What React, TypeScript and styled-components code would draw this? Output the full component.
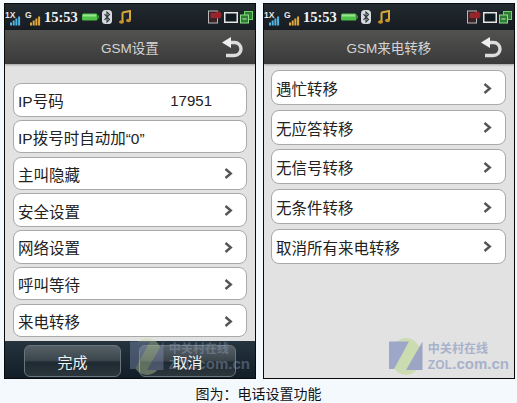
import React from "react";
import styled, { createGlobalStyle } from "styled-components";

const Global = createGlobalStyle`
  html, body { margin: 0; padding: 0; background: #f4f9fe; }
  body { width: 517px; height: 403px; overflow: hidden; font-family: "Liberation Sans", "Noto Sans CJK SC", sans-serif; }
`;

const Page = styled.div`
  width: 517px;
  height: 403px;
  display: flex;
  flex-direction: column;
`;

const Shots = styled.div`
  display: flex;
  gap: 7px;
  padding: 3px 0 0 4px;
  height: 376px;
`;

const Phone = styled.div`
  position: relative;
  box-sizing: border-box;
  width: 252px;
  height: 376px;
  border: 1px solid #0a0a0a;
  background: #e2e2e2;
  display: flex;
  flex-direction: column;
  overflow: hidden;
`;

const StatusBar = styled.div`
  height: 26px;
  flex: none;
  display: flex;
  align-items: center;
  padding: 0 2px 0 0;
  background: linear-gradient(#232a30, #161b20);
`;

const Clock = styled.span`
  font-family: "Liberation Serif", serif;
  font-weight: 700;
  font-size: 14.5px;
  color: #f2f2f2;
  margin: 0 4px 0 3px;
`;

const Gap = styled.span<{ $w: number }>`
  width: ${(p) => p.$w}px;
  flex: none;
`;

const StatusIcons = styled.div`
  margin-left: auto;
  display: flex;
  align-items: center;
  gap: 2px;
`;

const TitleBar = styled.div`
  position: relative;
  height: 34px;
  flex: none;
  display: flex;
  align-items: center;
  justify-content: center;
  background: linear-gradient(#525251, #3a3a3a);
  box-shadow: 0 1px 2px rgba(0, 0, 0, 0.3);
  color: #d4d4d4;
  font-size: 13.5px;
`;

const BackBtn = styled.svg`
  position: absolute;
  right: 12px;
  top: 7px;
`;

const List = styled.div<{ $top: number; $gap: number; $left: number }>`
  display: flex;
  flex-direction: column;
  gap: ${(p) => p.$gap}px;
  padding: ${(p) => p.$top}px 8px 0 ${(p) => p.$left}px;
`;

const Row = styled.div<{ $h: number }>`
  height: ${(p) => p.$h}px;
  flex: none;
  box-sizing: border-box;
  display: flex;
  align-items: center;
  padding: 1px 13px 0 4px;
  background: #fff;
  border: 1px solid #a9a9a9;
  border-radius: 8px;
  color: #222;
  font-size: 15.5px;
`;

const RowValue = styled.span`
  margin-left: auto;
  margin-right: 21px;
  font-size: 15px;
`;

const Chevron = styled.svg`
  margin-left: auto;
`;

const Footer = styled.div`
  margin-top: auto;
  height: 37px;
  flex: none;
  box-sizing: border-box;
  display: flex;
  gap: 18px;
  padding: 4px 0 1px 19px;
  background: linear-gradient(#25343f, #121e28);
`;

const FootBtn = styled.div`
  width: 97px;
  box-sizing: border-box;
  display: flex;
  align-items: center;
  justify-content: center;
  border: 1px solid #69757c;
  border-radius: 6px;
  background: linear-gradient(#566067, #3a454c 48%, #1f2a32 54%, #2a353c);
`;

const FootLabel = styled.span`
  position: relative;
  z-index: 2;
  color: #f1f1f1;
  font-size: 15px;
`;

const Watermark = styled.div<{ $dim?: boolean }>`
  position: absolute;
  z-index: 1;
  right: 5px;
  bottom: 3px;
  display: flex;
  align-items: center;
  gap: 5px;
  opacity: ${(p) => (p.$dim ? 0.38 : 0.8)};
`;

const MarkText = styled.div`
  display: flex;
  flex-direction: column;
  color: #9aa7c6;
  font-weight: 700;
  font-size: 15px;
  line-height: 13px;
`;

const MarkCn = styled.span`
  font-size: 12px;
  font-weight: 700;
  letter-spacing: 0.1px;
  line-height: 15px;
`;

const MarkZol = styled.span`
  font-size: 12px;
  letter-spacing: 0.2px;
`;

const Caption = styled.div`
  text-align: center;
  font-size: 14px;
  line-height: 20px;
  margin-top: 5px;
  color: #111;
`;

function Signal({ label, color }: { label: string; color: string }) {
  return (
    <svg width="16" height="17" viewBox="0 0 16 17">
      <text x="0" y="9" fontSize="8.5" fontWeight="700" fill="#e8e8e8" fontFamily="Liberation Sans">
        {label}
      </text>
      {[0, 1, 2, 3].map((i) => (
        <rect key={i} x={5 + i * 2.7} y={13.5 - i * 2} width="2" height={3 + i * 2} fill={color} />
      ))}
    </svg>
  );
}

function Battery() {
  return (
    <svg width="17" height="8" viewBox="0 0 17 8">
      <rect x="0" y="0.5" width="15.5" height="7" rx="1.5" fill="#4fc24a" />
      <rect x="1" y="1.5" width="13" height="2" fill="#9be58f" />
      <rect x="15.5" y="2.5" width="1.5" height="3" fill="#3a8f36" />
    </svg>
  );
}

function Bluetooth() {
  return (
    <svg width="10" height="14" viewBox="0 0 10 14">
      <rect width="10" height="14" rx="3.5" fill="#d5dade" />
      <path d="M2.5 4.2 7.5 9.6 5 12V2L7.5 4.4 2.5 9.8" fill="none" stroke="#2a3238" strokeWidth="1.1" />
    </svg>
  );
}

function Music() {
  return (
    <svg width="12" height="14" viewBox="0 0 12 14">
      <path d="M3.5 2.5 11 1v9" fill="none" stroke="#d8a93a" strokeWidth="2" />
      <path d="M3.5 2.5V12" stroke="#d8a93a" strokeWidth="2" />
      <ellipse cx="2.5" cy="12" rx="2.5" ry="1.8" fill="#c7932a" />
      <ellipse cx="9.5" cy="10.5" rx="2.5" ry="1.8" fill="#c7932a" />
    </svg>
  );
}

function TrayIcons() {
  return (
    <StatusIcons>
      <svg width="14" height="14" viewBox="0 0 14 14">
        <rect x="0.5" y="1" width="9" height="12" fill="#3a2226" stroke="#b9b9b9" />
        <rect x="2.5" y="3" width="5" height="5" fill="#8f2a30" />
        <circle cx="10" cy="5" r="3.5" fill="#9c2228" />
      </svg>
      <svg width="14" height="11" viewBox="0 0 14 11">
        <rect x="0.75" y="0.75" width="12.5" height="9.5" fill="#111a20" stroke="#e6e6e6" strokeWidth="1.5" />
      </svg>
      <svg width="13" height="13" viewBox="0 0 13 13">
        <rect x="4.5" y="0.5" width="8" height="8" fill="#2f7a34" stroke="#6fd16a" />
        <rect x="0.5" y="4" width="8" height="8" fill="#2f7a34" stroke="#8fe088" />
        <path d="M2.5 8h4" stroke="#c2f0bd" />
      </svg>
    </StatusIcons>
  );
}

function BackIcon() {
  return (
    <BackBtn width="21" height="21" viewBox="0 0 21 21">
      <path d="M8 5.5h4.5a6.5 6.5 0 0 1 0 13H4" fill="none" stroke="#dcdcdc" strokeWidth="3.4" />
      <path d="M0 5.5 9 0v11z" fill="#efefef" />
    </BackBtn>
  );
}

function Arrow() {
  return (
    <Chevron width="9" height="11" viewBox="0 0 9 11">
      <path d="M1.5 1 6.8 5.5 1.5 10" fill="none" stroke="#555" strokeWidth="2.4" />
    </Chevron>
  );
}

function Logo() {
  return (
    <svg width="34" height="37" viewBox="0 0 34 37">
      <ellipse cx="17" cy="18.5" rx="15.5" ry="18.5" fill="#c6dba4" />
      <path d="M0 3.5h20L5 31H0z" fill="#8c9ac2" />
      <path d="M33.5 3.5V32H17z" fill="#8c96bf" />
    </svg>
  );
}

function Mark({ dim }: { dim?: boolean }) {
  return (
    <Watermark $dim={dim}>
      <Logo />
      <MarkText>
        <MarkCn>中关村在线</MarkCn>
        <span>
          <MarkZol>ZOL</MarkZol>.com.cn
        </span>
      </MarkText>
    </Watermark>
  );
}

function Screen({ title, rows, footer }: { title: string; rows: React.ReactNode; footer?: boolean }) {
  return (
    <Phone>
      <StatusBar>
        <Signal label="1X" color="#4fb4e0" />
        <Gap $w={4} />
        <Signal label="G" color="#e0a83a" />
        <Clock>15:53</Clock>
        <Battery />
        <Gap $w={3} />
        <Bluetooth />
        <Gap $w={7} />
        <Music />
        <TrayIcons />
      </StatusBar>
      <TitleBar>
        {title}
        <BackIcon />
      </TitleBar>
      {rows}
      {footer && (
        <Footer>
          <FootBtn>
            <FootLabel>完成</FootLabel>
          </FootBtn>
          <FootBtn>
            <FootLabel>取消</FootLabel>
          </FootBtn>
        </Footer>
      )}
      <Mark dim={footer} />
    </Phone>
  );
}

const left = ["主叫隐藏", "安全设置", "网络设置", "呼叫等待", "来电转移"];
const right = ["遇忙转移", "无应答转移", "无信号转移", "无条件转移", "取消所有来电转移"];

export default function App() {
  return (
    <Page>
      <Global />
      <Shots>
        <Screen
          title="GSM设置"
          footer
          rows={
            <List $top={19} $gap={3.3} $left={8}>
              <Row $h={33.5}>
                IP号码<RowValue>17951</RowValue>
              </Row>
              <Row $h={33.5}>IP拨号时自动加“0”</Row>
              {left.map((t) => (
                <Row $h={33.5} key={t}>
                  {t}
                  <Arrow />
                </Row>
              ))}
            </List>
          }
        />
        <Screen
          title="GSM来电转移"
          rows={
            <List $top={6} $gap={4.7} $left={7}>
              {right.map((t) => (
                <Row $h={35} key={t}>
                  {t}
                  <Arrow />
                </Row>
              ))}
            </List>
          }
        />
      </Shots>
      <Caption>图为：电话设置功能</Caption>
    </Page>
  );
}
